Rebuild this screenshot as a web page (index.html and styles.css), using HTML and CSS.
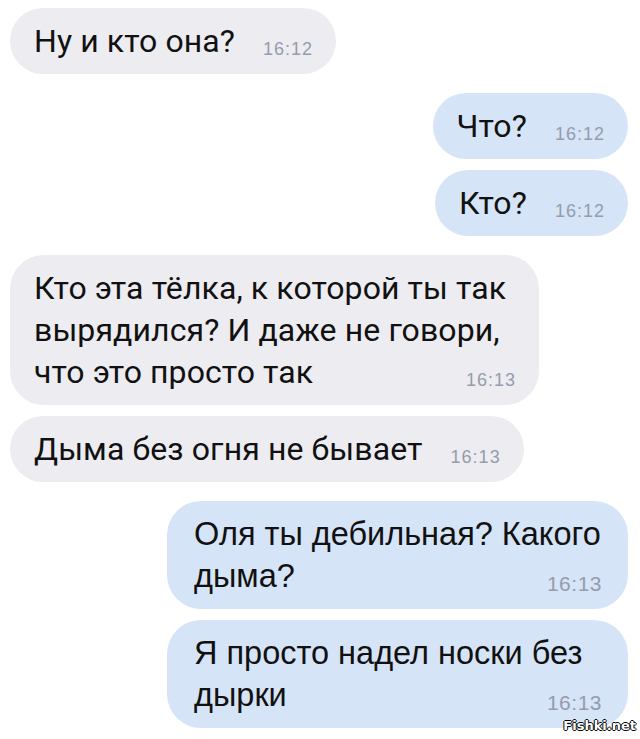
FILE: index.html
```html
<!DOCTYPE html>
<html lang="ru">
<head>
    <meta charset="UTF-8">
    <meta name="viewport" content="width=device-width, initial-scale=1.0">
    <title>Чат</title>
    <link rel="stylesheet" href="styles.css">
</head>
<body>
    <div class="chat">
        <div class="msg in"><span class="text">Ну и кто она?</span><span class="time">16:12</span></div>

        <div class="msg out gap"><span class="text">Что?</span><span class="time">16:12</span></div>
        <div class="msg out"><span class="text">Кто?</span><span class="time">16:12</span></div>

        <div class="msg in gap"><span class="text">Кто эта тёлка, к которой ты так вырядился? И даже не говори, что это просто так</span><span class="time">16:13</span></div>
        <div class="msg in"><span class="text">Дыма без огня не бывает</span><span class="time">16:13</span></div>

        <div class="msg out gap wide"><span class="text">Оля ты дебильная? Какого дыма?</span><span class="time">16:13</span></div>
        <div class="msg out wide"><span class="text">Я просто надел носки без дырки</span><span class="time">16:13</span></div>
    </div>

    <!-- watermark -->
    <div class="watermark">Fishki.net</div>
</body>
</html>
```

FILE: styles.css
```css
body {
    margin: 0;
    background: #fff;
    font-family: Roboto, "Liberation Sans", sans-serif;
    color: #111;
    height: 739px;
    position: relative;
    overflow: hidden;
}

.chat {
    display: flex;
    flex-direction: column;
    padding: 8px 12px 0 10px;
}

.msg {
    display: flow-root;
    width: fit-content;
    max-width: 482px;
    padding: 12px 23px 12px 24px;
    margin-top: 11px;
    border-radius: 34px;
    font-size: 32px;
    letter-spacing: 0.1px;
    line-height: 42px;
}

.msg:first-child {
    margin-top: 0;
}

.msg.gap {
    margin-top: 19px;
}

.in {
    align-self: flex-start;
    background: #ececf1;
}

.out {
    align-self: flex-end;
    background: #d6e4f7;
}

.wide {
    font-family: "Liberation Sans", Arial, sans-serif;
    font-size: 32.5px;
    letter-spacing: 0;
    max-width: 408px;
    padding-left: 27px;
    padding-right: 26px;
}

.time {
    float: right;
    margin: 8px 0 -8px 28px;
    font-family: "Liberation Sans", Arial, sans-serif;
    font-size: 18px;
    letter-spacing: 1px;
    color: #959cab;
}

.wide .time {
    font-size: 21px;
    letter-spacing: 0.5px;
}

.watermark {
    position: absolute;
    right: 4px;
    bottom: 6px;
    font-family: "DejaVu Sans", sans-serif;
    font-size: 13px;
    font-weight: bold;
    color: #fff;
    text-shadow: 1px 0 #000, -1px 0 #000, 0 1px #000, 0 -1px #000;
}
```
